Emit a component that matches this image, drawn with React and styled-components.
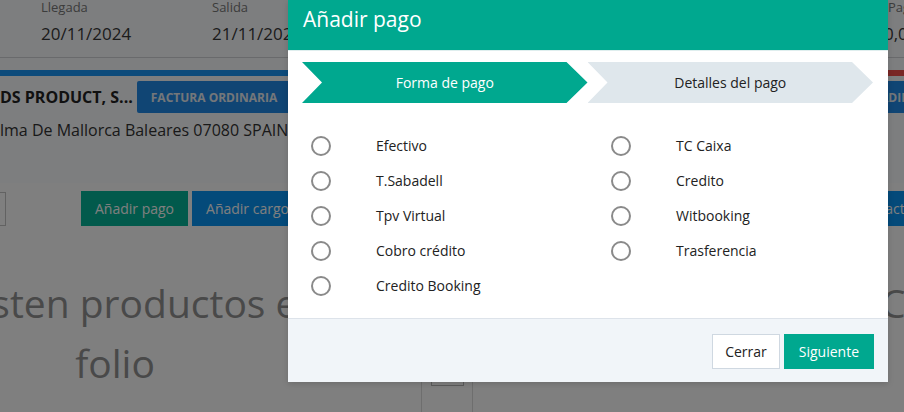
import React from "react";
import styled, { createGlobalStyle } from "styled-components";

const GlobalStyle = createGlobalStyle`
  html, body { margin: 0; padding: 0; }
  body {
    font-family: "Open Sans", "Liberation Sans", sans-serif;
    background: #ffffff;
  }
`;

const Page = styled.div`
  position: relative;
  width: 904px;
  height: 412px;
  overflow: hidden;
  display: flex;
  flex-direction: column;
  background: #ffffff;
`;

const TopCard = styled.div`
  display: flex;
  flex: 0 0 57px;
  padding-left: 41px;
  background: #fbfdff;
  border-bottom: 1px solid #d2d4d8;
`;

const Field = styled.div`
  flex: 0 0 ${(p) => p.$w}px;
  display: flex;
  flex-direction: column;
  white-space: nowrap;
`;

const FieldLabel = styled.span`
  font-size: 13px;
  line-height: 16px;
  margin-top: -1px;
  color: #787878;
`;

const FieldValue = styled.span`
  font-size: 17px;
  line-height: 20px;
  margin-top: 9px;
  margin-left: ${(p) => p.$shift || 0}px;
  color: #383838;
`;

const FolioRow = styled.div`
  flex: 1;
  display: flex;
`;

const Folio = styled.div`
  flex: 0 0 ${(p) => p.$w}px;
  min-width: 0;
  display: flex;
  flex-direction: column;
  white-space: nowrap;
`;

const FolioHead = styled.div`
  height: 125px;
  padding-top: 12px;
  box-sizing: border-box;
  background: #fbfdff;
`;

const Strip = styled.div`
  height: 6px;
  background: ${(p) => p.$color};
`;

const ClientRow = styled.div`
  display: flex;
  align-items: center;
  gap: 4px;
  height: 32px;
  margin-top: 5px;
  padding-left: ${(p) => p.$pad || 0}px;
`;

const ClientName = styled.span`
  font-size: 16px;
  font-weight: 700;
  color: #222222;
`;

const InvoiceButton = styled.div`
  height: 32px;
  padding: 0 14px;
  display: flex;
  align-items: center;
  background: #208ae8;
  color: #e8eef4;
  font-size: 12px;
  font-weight: 700;
  border-radius: 2px;
`;

const Address = styled.div`
  font-size: 16px;
  line-height: 24px;
  margin-top: 5px;
  color: #333333;
`;

const Toolbar = styled.div`
  display: flex;
  align-items: center;
  gap: 4px;
  height: 35px;
  margin-top: 8px;
  padding-left: ${(p) => p.$pad || 0}px;
`;

const SearchBox = styled.div`
  width: 106px;
  height: 34px;
  margin-left: -100px;
  margin-right: 71px;
  box-sizing: border-box;
  border: 1px solid #c4c4c4;
`;

const ActionButton = styled.div`
  height: 35px;
  padding: 0 14px;
  display: flex;
  align-items: center;
  font-size: 14px;
  color: #ffffff;
  background: ${(p) => p.$bg};
`;

const EmptyText = styled.div`
  display: flex;
  flex-direction: column;
  margin-top: 47px;
  font-size: 39px;
  line-height: 60px;
  color: #939393;
`;

const EmptyLine = styled.div`
  width: 700px;
  margin-left: ${(p) => p.$center - 350}px;
  text-align: center;
`;

const Divider = styled.div`
  flex: 0 0 52px;
  display: flex;
  flex-direction: column;
  justify-content: flex-end;
  padding-bottom: 26px;
  box-sizing: border-box;
  border-left: 1px solid #dcdcdc;
  border-right: 1px solid #dcdcdc;
`;

const SmallBox = styled.div`
  width: 33px;
  height: 30px;
  margin-left: 9px;
  box-sizing: border-box;
  border: 1px solid #b8b8b8;
`;

const Overlay = styled.div`
  position: absolute;
  inset: 0;
  background: rgba(0, 0, 0, 0.5);
`;

const Modal = styled.div`
  position: absolute;
  left: 288px;
  top: 0;
  width: 600px;
  height: 382px;
  display: flex;
  flex-direction: column;
  background: #ffffff;
  box-shadow: 0 2px 6px rgba(0, 0, 0, 0.15);
`;

const ModalHeader = styled.div`
  height: 45px;
  padding: 5px 15px 0;
  background: #00a88f;
  border-bottom: 1px solid #dfeeee;
`;

const ModalTitle = styled.h2`
  margin: 0;
  font-size: 21px;
  font-weight: 400;
  line-height: 28px;
  color: #ffffff;
`;

const ModalBody = styled.div`
  flex: 1;
  padding: 11px 15px 15px 14px;
`;

const Stepper = styled.div`
  display: flex;
  height: 41px;
`;

const Step = styled.div`
  flex: 1;
  display: flex;
  align-items: center;
  justify-content: center;
  font-size: 14px;
  background: ${(p) => (p.$active ? "#00a88f" : "#dfe7ec")};
  color: ${(p) => (p.$active ? "#ffffff" : "#222222")};
  clip-path: polygon(0 0, calc(100% - 21px) 0, 100% 50%, calc(100% - 21px) 100%, 0 100%, 20px 50%);
`;

const OptionGrid = styled.div`
  display: grid;
  grid-template-columns: 300px 300px;
  grid-auto-rows: 35px;
  margin: 25px -15px 0 -14px;
`;

const Option = styled.label`
  display: flex;
  align-items: center;
  padding-left: 23px;
  font-size: 14px;
  color: #222222;
`;

const Radio = styled.span`
  width: 20px;
  height: 20px;
  box-sizing: border-box;
  border: 2px solid #8a8a8a;
  border-radius: 50%;
  margin-right: 45px;
`;

const ModalFooter = styled.div`
  display: flex;
  justify-content: flex-end;
  gap: 4px;
  height: 64px;
  padding: 15px 14px 0 0;
  box-sizing: border-box;
  background: #f1f5f9;
  border-top: 1px solid #dde3ea;
`;

const FooterButton = styled.button`
  height: 35px;
  padding: 0 ${(p) => (p.$primary ? 14 : 12)}px;
  font-family: inherit;
  font-size: 14px;
  border: 1px solid ${(p) => (p.$primary ? "#00a88f" : "#cfd8e1")};
  background: ${(p) => (p.$primary ? "#00a88f" : "#ffffff")};
  color: ${(p) => (p.$primary ? "#ffffff" : "#222222")};
  border-radius: 0;
`;

const options = [
  "Efectivo",
  "TC Caixa",
  "T.Sabadell",
  "Credito",
  "Tpv Virtual",
  "Witbooking",
  "Cobro crédito",
  "Trasferencia",
  "Credito Booking",
];

export default function App() {
  return (
    <>
      <GlobalStyle />
      <Page>
        <TopCard>
          <Field $w={171}>
            <FieldLabel>Llegada</FieldLabel>
            <FieldValue>20/11/2024</FieldValue>
          </Field>
          <Field $w={676}>
            <FieldLabel>Salida</FieldLabel>
            <FieldValue>21/11/2024</FieldValue>
          </Field>
          <Field $w={120}>
            <FieldLabel>Pagado</FieldLabel>
            <FieldValue $shift={-4}>0,00 €</FieldValue>
          </Field>
        </TopCard>

        <FolioRow>
          <Folio $w={421}>
            <FolioHead>
              <Strip $color="#1a96f6" />
              <ClientRow>
                <ClientName>DS PRODUCT, S...</ClientName>
                <InvoiceButton>FACTURA ORDINARIA</InvoiceButton>
              </ClientRow>
              <Address>lma De Mallorca Baleares 07080 SPAIN</Address>
            </FolioHead>
            <Toolbar>
              <SearchBox />
              <ActionButton $bg="#04b498">Añadir pago</ActionButton>
              <ActionButton $bg="#0894f4">Añadir cargo</ActionButton>
            </Toolbar>
            <EmptyText>
              <EmptyLine $center={142}>No existen productos en este</EmptyLine>
              <EmptyLine $center={115}>folio</EmptyLine>
            </EmptyText>
          </Folio>

          <Divider>
            <SmallBox />
          </Divider>

          <Folio $w={520}>
            <FolioHead>
              <Strip $color="#f24c4a" />
              <ClientRow $pad={326}>
                <InvoiceButton>FACTURA ORDINARIA</InvoiceButton>
              </ClientRow>
              <Address>&nbsp;</Address>
            </FolioHead>
            <Toolbar $pad={391}>
              <ActionButton $bg="#0894f4">Facturar</ActionButton>
            </Toolbar>
            <EmptyText>
              <EmptyLine $center={473}>Cobros</EmptyLine>
            </EmptyText>
          </Folio>
        </FolioRow>

        <Overlay />

        <Modal>
          <ModalHeader>
            <ModalTitle>Añadir pago</ModalTitle>
          </ModalHeader>
          <ModalBody>
            <Stepper>
              <Step $active>Forma de pago</Step>
              <Step>Detalles del pago</Step>
            </Stepper>
            <OptionGrid>
              {options.map((o) => (
                <Option key={o}>
                  <Radio />
                  {o}
                </Option>
              ))}
            </OptionGrid>
          </ModalBody>
          <ModalFooter>
            <FooterButton>Cerrar</FooterButton>
            <FooterButton $primary>Siguiente</FooterButton>
          </ModalFooter>
        </Modal>
      </Page>
    </>
  );
}
